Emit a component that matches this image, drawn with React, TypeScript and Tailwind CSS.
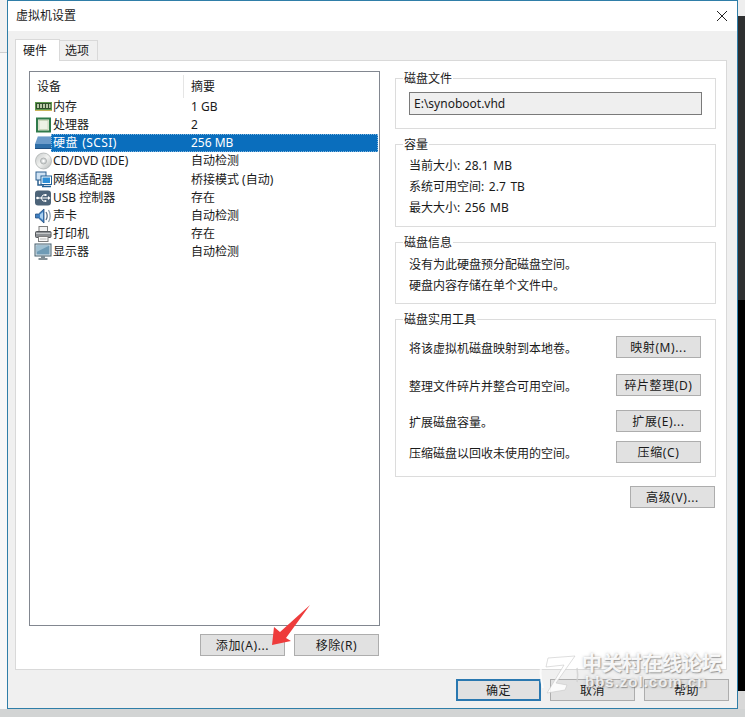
import React from 'react';

const RamIcon = () => (
  <svg width="18" height="18" viewBox="0 0 18 18">
    <rect x="1" y="4" width="17" height="9" fill="#5f9a4f" />
    <rect x="2" y="5" width="15" height="6" fill="#2f4f2a" />
    <path d="M3 6h2v4H3zM6 6h2v4H6zM9 6h2v4H9zM12 6h2v4h-2zM15 6h1.500v4H15z" fill="#b9c8a8" />
    <path d="M1 12.500h17" stroke="#c9b45a" strokeWidth="1" />
  </svg>
);

const CpuIcon = () => (
  <svg width="18" height="18" viewBox="0 0 18 18">
    <rect x="3" y="2.500" width="13" height="13" fill="#e6ecd8" stroke="#2f7a4a" strokeWidth="2" />
    <rect x="5" y="4.500" width="9" height="9" fill="#eef2e6" stroke="#a9bd9a" strokeWidth="0.500" />
  </svg>
);

const HddIcon = () => (
  <svg width="18" height="18" viewBox="0 0 18 18">
    <path d="M1 10L4 2h14v8z" fill="#6b9bc9" />
    <path d="M1 10h17v4H1z" fill="#2f6fa8" />
    <path d="M4 2.500h14" stroke="#a8c6e2" strokeWidth="1" />
    <path d="M1 14.500h17" stroke="#1f4f7f" strokeWidth="1" />
  </svg>
);

const CdIcon = () => (
  <svg width="18" height="18" viewBox="0 0 18 18">
    <defs>
      <linearGradient id="cd" x1="0" y1="0" x2="1" y2="1">
        <stop offset="0" stopColor="#c4c8c8" />
        <stop offset="0.500" stopColor="#f1f2f0" />
        <stop offset="1" stopColor="#b2b6b6" />
      </linearGradient>
    </defs>
    <circle cx="9.500" cy="9" r="8" fill="url(#cd)" stroke="#a6aaaa" strokeWidth="0.700" />
    <circle cx="9.500" cy="9" r="3" fill="#d6d9d9" stroke="#9a9e9e" strokeWidth="0.700" />
    <circle cx="9.500" cy="9" r="1.200" fill="#ffffff" />
  </svg>
);

const NetIcon = () => (
  <svg width="18" height="18" viewBox="0 0 18 18">
    <rect x="2" y="1" width="10" height="8" fill="#cfe2f3" stroke="#2a5f8f" />
    <path d="M4 9v5h6" stroke="#2a5f8f" fill="none" strokeWidth="1.500" />
    <rect x="7" y="5" width="10.500" height="8.500" fill="#ffffff" stroke="#1f5f96" />
    <rect x="8.500" y="6.500" width="7.500" height="5.500" fill="#2f8fd6" />
    <path d="M8 15.500h9" stroke="#1f5f96" strokeWidth="1.500" />
  </svg>
);

const UsbIcon = () => (
  <svg width="18" height="18" viewBox="0 0 18 18">
    <rect x="1" y="1.500" width="16" height="15" rx="3" fill="#4d6479" />
    <path d="M3 9h11M7 9l2-3h2M7 9l2 3h2" stroke="#ffffff" strokeWidth="1" fill="none" />
    <path d="M14 7v4l2.500-2z" fill="#ffffff" />
    <rect x="10.500" y="5" width="2" height="2" fill="#ffffff" />
    <circle cx="11.500" cy="12" r="1" fill="#ffffff" />
    <circle cx="3.500" cy="9" r="1.300" fill="#ffffff" />
  </svg>
);

const SoundIcon = () => (
  <svg width="18" height="18" viewBox="0 0 18 18">
    <path d="M1.500 7h3L10 2v14L4.500 11h-3z" fill="#3f7fc0" stroke="#234f7f" strokeWidth="0.800" />
    <path d="M6 7.500L9 5v8l-3-2.500z" fill="#a9d0f0" />
    <path d="M12 5c1.500 2.500 1.500 5.500 0 8" stroke="#5a6f86" strokeWidth="1.300" fill="none" />
    <path d="M14.500 3c2 3.500 2 8.500 0 12" stroke="#8fa0b0" strokeWidth="1.300" fill="none" />
  </svg>
);

const PrinterIcon = () => (
  <svg width="18" height="18" viewBox="0 0 18 18">
    <rect x="5" y="1.500" width="8.500" height="5" fill="#f4f4f4" stroke="#7d7d7d" />
    <rect x="1.500" y="6.500" width="15.500" height="6" rx="1" fill="#8c9094" stroke="#55595d" />
    <path d="M2 8.500h14.500" stroke="#c5c8ca" />
    <rect x="4.500" y="11.500" width="9.500" height="5" fill="#f7f7f7" stroke="#7d7d7d" />
    <path d="M6 14h6.500" stroke="#b8b8b8" />
  </svg>
);

const MonitorIcon = () => (
  <svg width="18" height="18" viewBox="0 0 18 18">
    <rect x="1" y="1" width="16" height="12" fill="#dfe7ec" stroke="#47606f" />
    <rect x="2.500" y="2.500" width="13" height="9" fill="#6f9bb5" />
    <path d="M2.500 2.500h13L2.500 9z" fill="#9fc0d2" />
    <path d="M7 13h4v2H7z" fill="#7d8c95" />
    <path d="M4.500 16h9" stroke="#5d6c75" strokeWidth="1.500" />
  </svg>
);

const devices = [
  { icon: <RamIcon />, name: '内存', summary: '1 GB', row: 'h-[18px]' },
  { icon: <CpuIcon />, name: '处理器', summary: '2', row: 'h-[18px]' },
  { icon: <HddIcon />, name: '硬盘 (SCSI)', summary: '256 MB', row: 'h-[18px]', selected: true },
  { icon: <CdIcon />, name: 'CD/DVD (IDE)', summary: '自动检测', row: 'h-[19px]' },
  { icon: <NetIcon />, name: '网络适配器', summary: '桥接模式 (自动)', row: 'h-[18px]' },
  { icon: <UsbIcon />, name: 'USB 控制器', summary: '存在', row: 'h-[18px]' },
  { icon: <SoundIcon />, name: '声卡', summary: '自动检测', row: 'h-[18px]' },
  { icon: <PrinterIcon />, name: '打印机', summary: '存在', row: 'h-[18px]' },
  { icon: <MonitorIcon />, name: '显示器', summary: '自动检测', row: 'h-[18px]' },
];

const Btn = ({ children, primary }: { children: React.ReactNode; primary?: boolean }) => (
  <button
    className={`w-[85px] h-[22px] shrink-0 flex items-center justify-center pt-px bg-[#e1e1e1] text-[#1a1a1a] text-[12px] leading-none tracking-[0.6px] ${
      primary ? 'border-2 border-[#2a78b0]' : 'border border-[#adadad]'
    }`}
  >
    {children}
  </button>
);

const Group = ({ title, className, children }: { title: string; className: string; children: React.ReactNode }) => (
  <fieldset className={`border border-[#dcdcdc] ${className}`}>
    <legend className="ml-[7px] px-px h-[14px] leading-[16px] text-[12px] text-[#1a1a1a]">{title}</legend>
    <div className="px-[13px]">{children}</div>
  </fieldset>
);

const tools = [
  { text: '将该虚拟机磁盘映射到本地卷。', label: '映射(M)...', gap: 'mt-[10px]' },
  { text: '整理文件碎片并整合可用空间。', label: '碎片整理(D)', gap: 'mt-[16px]' },
  { text: '扩展磁盘容量。', label: '扩展(E)...', gap: 'mt-[14px]' },
  { text: '压缩磁盘以回收未使用的空间。', label: '压缩(C)', gap: 'mt-[9px]' },
];

export default function App() {
  return (
    <div className="relative w-[745px] h-[717px] overflow-hidden flex flex-col bg-[#d4d6d6] font-['Noto_Sans','Noto_Sans_CJK_SC',sans-serif] text-[12px] text-[#1a1a1a]">
      <div className="flex h-[709px]">
        {/* bits of the desktop behind the dialog */}
        <div className="w-[7px] flex flex-col bg-[#f7f7f7]">
          <div className="h-[53px] bg-[#f1f1f1] border-b border-[#cfcfcf]" />
        </div>

        <div className="w-[731px] flex flex-col border border-[#2f7ea8] bg-[#f0f0f0]">
          <div className="h-[30px] shrink-0 bg-white flex items-center justify-between pl-[8px] pr-[9px]">
            <span className="text-[12px]">虚拟机设置</span>
            <svg width="12" height="12" viewBox="0 0 12 12">
              <path d="M1 1l10 10M11 1L1 11" stroke="#222222" strokeWidth="1" />
            </svg>
          </div>

          {/* tabs */}
          <div className="h-[29px] shrink-0 flex items-end pl-[7px]">
            <div className="relative z-10 -mb-px w-[45px] h-[22px] bg-white border border-b-0 border-[#d9d9d9] flex items-center justify-center pr-[5px]">
              硬件
            </div>
            <div className="w-[38px] h-[20px] bg-[#f0f0f0] border border-l-0 border-b-0 border-[#d9d9d9] flex items-center justify-center pr-[3px] pt-px">
              选项
            </div>
          </div>

          <div className="ml-[7px] w-[712px] h-[610px] shrink-0 bg-white border border-[#d9d9d9] flex">
            {/* device list */}
            <div className="w-[351px] ml-[13px] pt-[10px] shrink-0">
              <div className="h-[555px] border border-[#828790] pt-[3px]">
                <div className="flex h-[23px] items-center">
                  <div className="w-[154px] h-full pl-[7px] border-r border-[#e5e5e5] flex items-center">设备</div>
                  <div className="pl-[7px]">摘要</div>
                </div>
                {devices.map(d => (
                  <div key={d.name} className={`flex pl-[4px] pr-px ${d.row}`}>
                    <div className="w-[17px] shrink-0">{d.icon}</div>
                    <div
                      className={`flex-1 h-[18px] flex items-center pl-[2px] ${
                        d.selected ? 'bg-[#0a6ebd] text-white outline-1 outline-dotted outline-offset-[-1px] outline-[#7fb4dc]' : ''
                      }`}
                    >
                      <span className={`w-[138px] shrink-0 whitespace-nowrap ${d.selected ? 'tracking-[0.4px] [word-spacing:1px]' : ''}`}>
                        {d.name}
                      </span>
                      <span className="whitespace-nowrap">{d.summary}</span>
                    </div>
                  </div>
                ))}
              </div>
              <div className="mt-[8px] flex justify-end gap-[9px] pr-px">
                <Btn>添加(A)...</Btn>
                <Btn>移除(R)</Btn>
              </div>
            </div>

            {/* disk details */}
            <div className="w-[321px] ml-[15px] pt-[10px] shrink-0 flex flex-col gap-[8px]">
              <Group title="磁盘文件" className="h-[58px]">
                <div className="mt-[7px] w-[293px] h-[23px] bg-[#efefef] border border-[#7a7a7a] flex items-center pl-[4px]">
                  E:\synoboot.vhd
                </div>
              </Group>
              <Group title="容量" className="h-[90px] leading-[21px]">
                <div className="pt-[4px] [word-spacing:1.500px]">
                  <div>当前大小: 28.1 MB</div>
                  <div>系统可用空间: 2.7 TB</div>
                  <div>最大大小: 256 MB</div>
                </div>
              </Group>
              <Group title="磁盘信息" className="h-[69px] leading-[21px]">
                <div className="pt-[5px]">
                  <div>没有为此硬盘预分配磁盘空间。</div>
                  <div>硬盘内容存储在单个文件中。</div>
                </div>
              </Group>
              <Group title="磁盘实用工具" className="h-[165px]">
                {tools.map(t => (
                  <div key={t.label} className={`flex items-center justify-between pr-px ${t.gap}`}>
                    <span className="pt-[4px]">{t.text}</span>
                    <Btn>{t.label}</Btn>
                  </div>
                ))}
              </Group>
              <div className="mt-px flex justify-end pr-px">
                <Btn>高级(V)...</Btn>
              </div>
            </div>
          </div>

          <div className="mt-[9px] flex justify-end gap-[9px] pr-[8px]">
            <Btn primary>确定</Btn>
            <Btn>取消</Btn>
            <Btn>帮助</Btn>
          </div>
        </div>

        <div className="w-[7px] flex flex-col bg-black">
          <div className="h-[16px] bg-[#eeeeee]" />
          <div className="h-[284px] bg-[#2e2f30]" />
          <div className="flex-1 bg-black" />
          <div className="h-[18px] bg-[#d8d8d8]" />
        </div>
      </div>
      <div className="h-[8px] bg-[#d2d4d4]" />

      {/* red arrow annotation */}
      <svg className="absolute left-[265px] top-[600px]" width="50" height="50" viewBox="0 0 50 50">
        <path d="M7 45L9 27l6 5L45 5 21 38l5 3z" fill="#ee3c3c" />
      </svg>

      {/* forum watermark */}
      <div className="absolute left-[538px] top-[652px] flex items-start pointer-events-none">
        <svg width="46" height="44" viewBox="0 0 46 44">
          <path d="M10 6L37 4 18 31l11 2-2 5-18 3 17-28-18 2z" fill="#ffffff" fillOpacity="0.85" stroke="#c8c8c8" strokeWidth="0.600" />
          <path d="M4 10c-2 8-2 17 1 26" stroke="#ffffff" strokeOpacity="0.7" strokeWidth="2" fill="none" />
          <path d="M39 16c1 5 1 9 0 14" stroke="#d0d0d0" strokeOpacity="0.8" strokeWidth="1.500" fill="none" />
        </svg>
        <div className="-ml-[2px] flex flex-col">
          <span className="text-[20px] leading-[24px] font-bold text-white/90 [text-shadow:1px_1px_1px_rgba(110,110,110,0.6),0_0_3px_rgba(120,120,120,0.5)] whitespace-nowrap">
            中关村在线论坛
          </span>
          <span className="-mt-[2px] ml-[3px] font-['Liberation_Sans',sans-serif] text-[15px] leading-[16px] font-bold tracking-[1px] text-white/80 [text-shadow:1px_1px_1px_rgba(110,110,110,0.6),0_0_3px_rgba(120,120,120,0.5)] whitespace-nowrap">
            bbs.zol.com.cn
          </span>
        </div>
      </div>
    </div>
  );
}
